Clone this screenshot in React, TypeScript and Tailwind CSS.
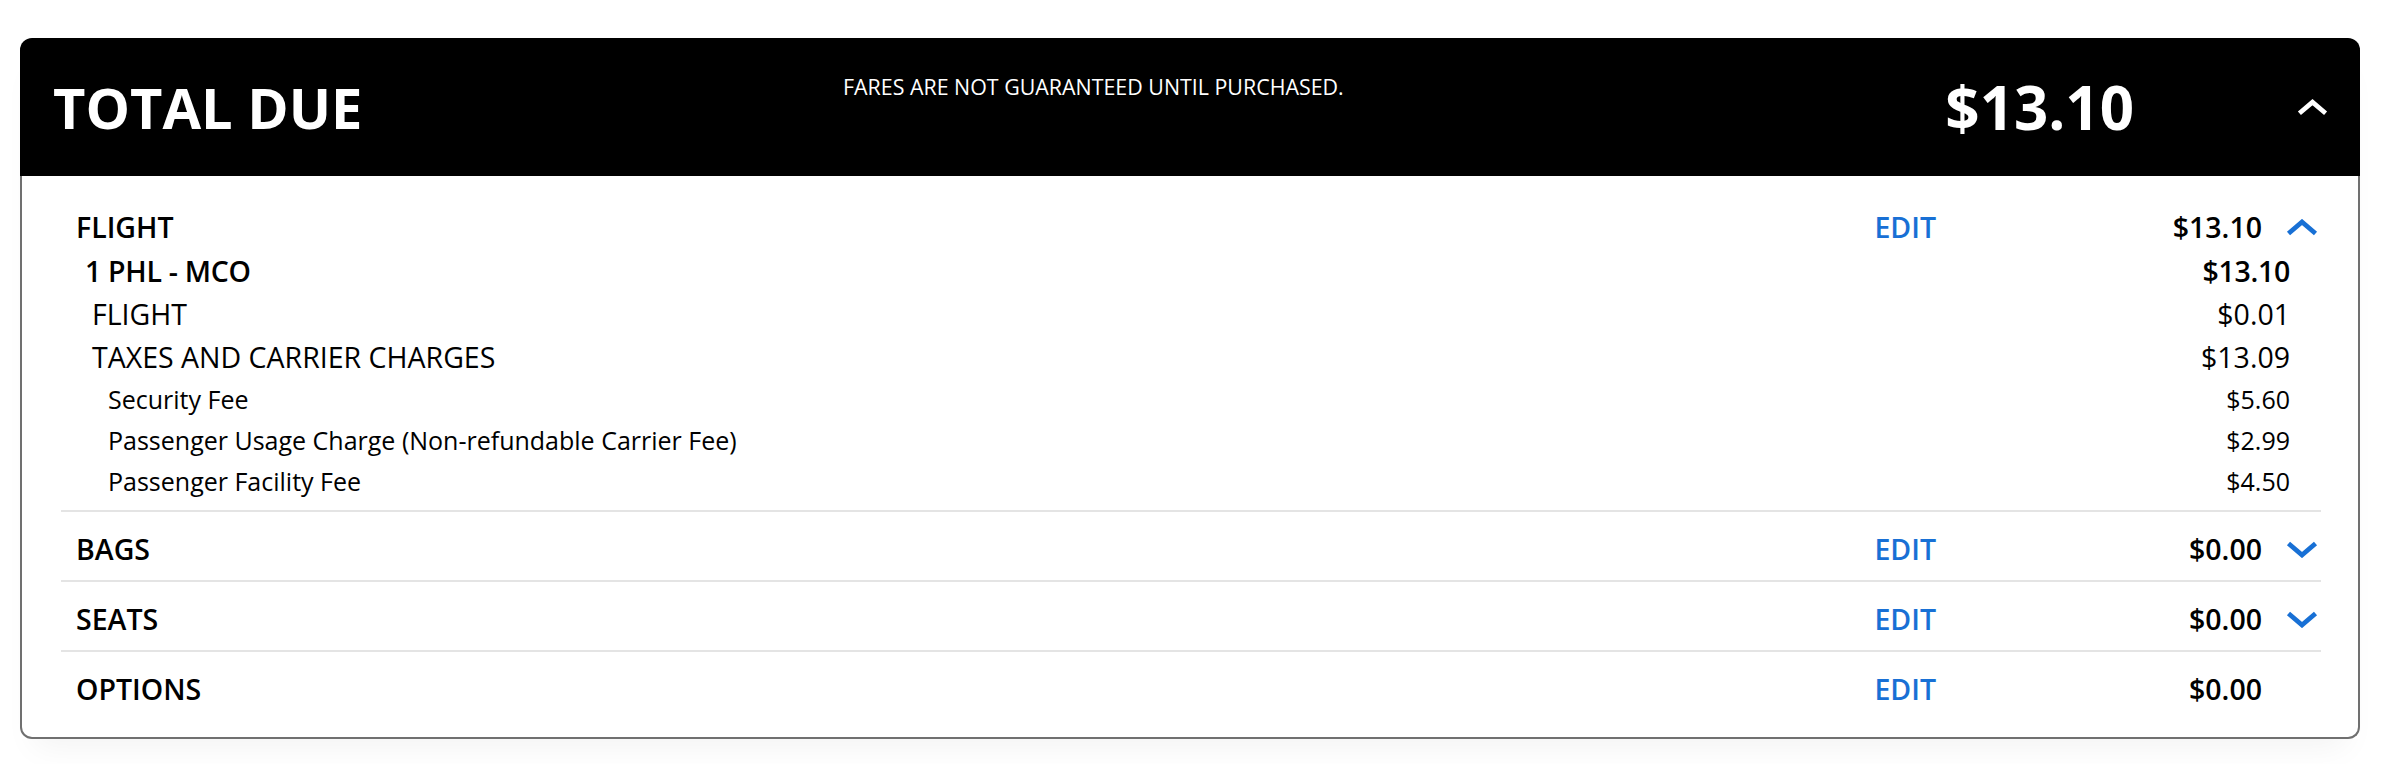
type Fee = { label: string; amount: string };

const fees: Fee[] = [
  { label: "Security Fee", amount: "$5.60" },
  { label: "Passenger Usage Charge (Non-refundable Carrier Fee)", amount: "$2.99" },
  { label: "Passenger Facility Fee", amount: "$4.50" },
];

const sections: Array<{ label: string; amount: string; chevron: "up" | "down" | null }> = [
  { label: "BAGS", amount: "$0.00", chevron: "down" },
  { label: "SEATS", amount: "$0.00", chevron: "down" },
  { label: "OPTIONS", amount: "$0.00", chevron: null },
];

function Chevron({ dir, className }: { dir: "up" | "down"; className: string }) {
  return (
    <svg viewBox="0 0 32 16" className={className} fill="none" stroke="currentColor" aria-hidden="true">
      {dir === "up" ? (
        <polyline points="2.5,14 16,2.5 29.5,14" strokeWidth={4.8} strokeLinejoin="miter" />
      ) : (
        <polyline points="2.5,2 16,13.5 29.5,2" strokeWidth={4.8} strokeLinejoin="miter" />
      )}
    </svg>
  );
}

function SectionRow({
  label,
  amount,
  chevron,
}: {
  label: string;
  amount: string;
  chevron: "up" | "down" | null;
}) {
  return (
    <div className="flex h-[46px] items-center pl-[15px] pr-[3px]">
      <div className="flex-1 text-[28.5px] font-semibold text-black">{label}</div>
      <button type="button" className="text-[28.5px] font-semibold text-[#1870d5]">
        EDIT
      </button>
      <div className="w-[326px] text-right text-[28.5px] font-semibold text-black">{amount}</div>
      <div className="flex w-[56px] justify-end">
        {chevron && <Chevron dir={chevron} className="h-[17px] w-[32px] text-[#1870d5]" />}
      </div>
    </div>
  );
}

function LineRow({
  label,
  amount,
  indent,
  small,
  bold,
}: {
  label: string;
  amount: string;
  indent: string;
  small?: boolean;
  bold?: boolean;
}) {
  const size = small ? "h-[41px] text-[25px]" : "h-[43px] text-[28.5px]";
  const weight = bold ? "font-semibold tracking-[-0.3px]" : "font-normal";
  return (
    <div className={`flex items-center pr-[31px] text-black ${size} ${weight} ${indent}`}>
      <div className="flex-1">{label}</div>
      <div>{amount}</div>
    </div>
  );
}

export default function App() {
  return (
    <div className="min-h-screen bg-white pl-[20px] pt-[38px] font-['Open_Sans',sans-serif]">
      <div className="w-[2340px] shadow-[0_22px_30px_-14px_rgba(0,0,0,0.05)]">
        <header className="flex h-[138px] items-center rounded-t-[12px] bg-black pl-[33px] pr-[32px] text-white">
          <h1 className="w-[790px] text-[56px] font-bold leading-none">TOTAL DUE</h1>
          <p className="mt-[38px] self-start text-[21.4px] leading-[22px]">
            FARES ARE NOT GUARANTEED UNTIL PURCHASED.
          </p>
          <div className="flex-1" />
          <div className="text-[60px] font-bold leading-none">$13.10</div>
          <Chevron dir="up" className="ml-[163px] h-[17px] w-[31px] text-white" />
        </header>

        <div className="rounded-b-[12px] border-x-2 border-b-2 border-[#707070] bg-white pb-[17px] pl-[39px] pr-[37px] pt-[14px]">
          <div className="divide-y-2 divide-[#e4e4e4]">
            <section className="pb-[8px] pt-[14px]">
              <SectionRow label="FLIGHT" amount="$13.10" chevron="up" />
              <LineRow label="1 PHL - MCO" amount="$13.10" indent="pl-[24px]" bold />
              <LineRow label="FLIGHT" amount="$0.01" indent="pl-[31px]" />
              <LineRow label="TAXES AND CARRIER CHARGES" amount="$13.09" indent="pl-[31px]" />
              {fees.map((fee) => (
                <LineRow key={fee.label} label={fee.label} amount={fee.amount} indent="pl-[47px]" small />
              ))}
            </section>
            {sections.map((s) => (
              <section key={s.label} className="pb-[8px] pt-[14px]">
                <SectionRow label={s.label} amount={s.amount} chevron={s.chevron} />
              </section>
            ))}
          </div>
        </div>
      </div>
    </div>
  );
}
